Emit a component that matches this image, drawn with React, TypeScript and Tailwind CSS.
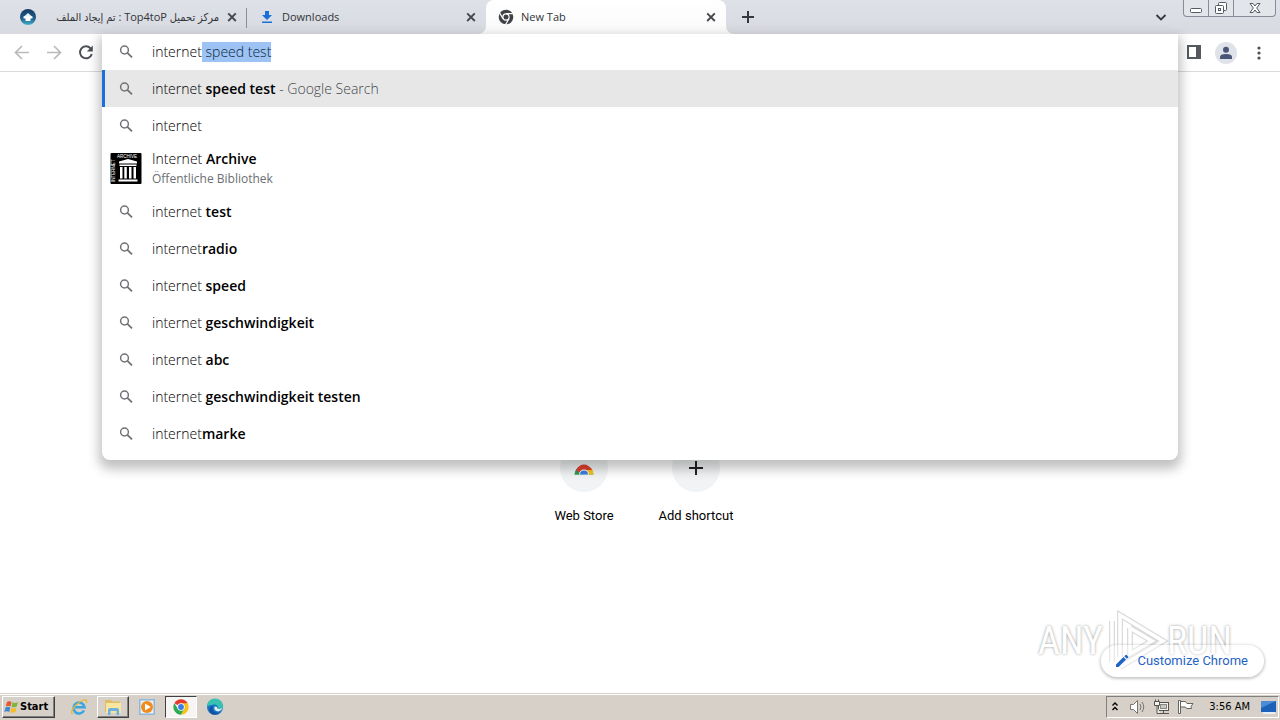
import { useEffect, useRef } from "react";
import type { ReactNode } from "react";

type Suggestion = { typed: string; rest: string };

const suggestions: Suggestion[] = [
  { typed: "internet ", rest: "test" },
  { typed: "internet", rest: "radio" },
  { typed: "internet ", rest: "speed" },
  { typed: "internet ", rest: "geschwindigkeit" },
  { typed: "internet ", rest: "abc" },
  { typed: "internet ", rest: "geschwindigkeit testen" },
  { typed: "internet", rest: "marke" },
];

function SearchIcon() {
  return (
    <svg viewBox="0 0 16 16" className="size-4 shrink-0" fill="none" stroke="#6f7377" strokeWidth="1.5" aria-hidden="true">
      <circle cx="6.500" cy="6" r="3.900" />
      <path d="M9.400 8.900 14 13.400" strokeWidth="1.800" />
    </svg>
  );
}

function CloseIcon() {
  return (
    <svg viewBox="0 0 16 16" className="size-4" fill="none" stroke="#46484d" strokeWidth="1.900" aria-hidden="true">
      <path d="M4.200 4.400 11.800 12M11.800 4.400 4.200 12" />
    </svg>
  );
}

function TopFavicon() {
  return (
    <svg viewBox="0 0 16 16" className="size-4 shrink-0" aria-hidden="true">
      <defs>
        <linearGradient id="fav" x1="0" y1="0" x2="0" y2="1">
          <stop offset="0" stopColor="#173a63" />
          <stop offset="0.6" stopColor="#1f5c8e" />
          <stop offset="1" stopColor="#45b5c9" />
        </linearGradient>
      </defs>
      <circle cx="8" cy="8" r="8" fill="url(#fav)" />
      <path d="M8 4 12.500 8H3.500Z" fill="#e6f2fa" />
      <path d="M3.500 7.500h9v2h-2V12h-5V9.500h-2z" fill="#fff" />
    </svg>
  );
}

function DownloadIcon() {
  return (
    <svg viewBox="0 0 16 16" className="size-4 shrink-0" fill="#1a6fd8" aria-hidden="true">
      <path d="M6 2h4v4h3L8 11 3 6h3zM3 12.500h10V14H3z" />
    </svg>
  );
}

function ChromeMono() {
  return (
    <svg viewBox="0 0 16 16" className="size-4 shrink-0" aria-hidden="true">
      <circle cx="8" cy="8" r="7.300" fill="#3f4246" />
      <circle cx="8" cy="8" r="3.700" fill="#fff" />
      <circle cx="8" cy="8" r="2.500" fill="#3f4246" />
      <path d="M8 4.600h7.500M5 9.700 1.300 3.400M11 9.700 7.300 16" stroke="#fff" strokeWidth="1.200" />
    </svg>
  );
}

function ChromeColor() {
  return (
    <svg viewBox="0 0 48 48" className="size-4" aria-hidden="true">
      <path d="M24 24 4.100 12.500A23 23 0 0 1 43.900 12.500Z" fill="#e33b2e" />
      <path d="M24 13h20A23 23 0 0 1 24 47l9.500-17.500Z" fill="#fbc116" />
      <path d="M14.500 29.500 4.100 12.500A23 23 0 0 0 24 47l9.500-17.500Z" fill="#2da94f" />
      <circle cx="24" cy="24" r="11" fill="#fff" />
      <circle cx="24" cy="24" r="8.700" fill="#3a7de8" />
    </svg>
  );
}

function ArchiveLogo() {
  return (
    <svg viewBox="0 1 32 32" className="size-8 shrink-0" role="img" aria-label="Internet Archive">
      <rect x="0.500" y="1" width="31" height="31" rx="1" fill="#000" />
      <g fill="#fff">
        <path d="M18 7 27 9.500v2H9V9.500ZM9.500 12.500h17V14h-17zM10 15h2.500v11.500H10zM14.300 15h2.500v11.500h-2.500zM19 15h2.500v11.500H19zM23.500 15H26v11.500h-2.500zM8.500 27.500h19v2h-19z" />
      </g>
      <text x="7" y="6" fontSize="4.500" fill="#fff" fontFamily="Liberation Sans">ARCHIVE</text>
      <text x="-30" y="5" fontSize="4.500" fill="#fff" fontFamily="Liberation Sans" transform="rotate(-90)">INTERNET</text>
    </svg>
  );
}

function Tab({ icon, title, active, divider, rtl }: { icon: ReactNode; title: string; active?: boolean; divider?: boolean; rtl?: boolean }) {
  return (
    <div
      role="tab"
      aria-selected={!!active}
      className={
        "relative flex h-[34px] min-w-0 items-center gap-[7px] pr-[7px] pl-3 " +
        (active ? "w-60 rounded-t-lg bg-linear-to-b from-white to-[#fafafa]" : "w-[239px]")
      }
    >
      {active && (
        <>
          <svg viewBox="0 0 8 8" className="absolute bottom-0 -left-2 size-2" aria-hidden="true"><path d="M8 0v8H0a8 8 0 0 0 8-8Z" fill="#fafafa" /></svg>
          <svg viewBox="0 0 8 8" className="absolute -right-2 bottom-0 size-2" aria-hidden="true"><path d="M0 0v8h8a8 8 0 0 1-8-8Z" fill="#fafafa" /></svg>
        </>
      )}
      {icon}
      <span
        dir={rtl ? "rtl" : "ltr"}
        className={
          "min-w-0 flex-1 overflow-hidden text-[11px] leading-4 whitespace-nowrap text-[#303338] " +
          (rtl ? "-mr-0.5 font-['Open_Sans','DejaVu_Sans_Condensed','DejaVu_Sans',sans-serif]" : "")
        }
      >
        {title}
      </span>
      <button type="button" aria-label="Close tab"><CloseIcon /></button>
      {divider && <span className="absolute top-2 right-0 h-5 w-px bg-[#8b8f96]" />}
    </div>
  );
}

function WindowButtons() {
  return (
    <div className="flex h-[17px] self-start overflow-hidden rounded-b-[4px] border border-t-0 border-[#878c96] bg-[#e2e5ea]">
      <button type="button" aria-label="Minimize" className="flex w-[25px] items-center justify-center border-r border-[#878c96]">
        <svg viewBox="0 0 14 14" className="size-3.5" fill="#fff" stroke="#555a63"><rect x="1.500" y="7.500" width="11" height="4" rx="1" /></svg>
      </button>
      <button type="button" aria-label="Restore" className="flex w-[25px] items-center justify-center border-r border-[#878c96]">
        <svg viewBox="0 0 14 14" className="size-3.5" fill="#fff" stroke="#555a63"><rect x="4.500" y="1.500" width="8" height="8" rx="1" /><rect x="1.500" y="4.500" width="8" height="8" rx="1" /><rect x="4.500" y="7.500" width="2" height="2" /></svg>
      </button>
      <button type="button" aria-label="Close window" className="flex w-[41px] items-center justify-center">
        <svg viewBox="0 0 14 14" className="size-3.5" fill="#fff" stroke="#555a63"><path d="M2 2.500h3l2 2.500 2-2.500h3L8.700 7l3.300 4.500H9L7 9l-2 2.500H2L5.300 7Z" /></svg>
      </button>
    </div>
  );
}

function Omnibox() {
  const input = useRef<HTMLInputElement>(null);
  useEffect(() => {
    input.current?.focus();
    input.current?.setSelectionRange(8, 19);
  }, []);
  const row = "flex h-[37px] w-full items-center gap-[18px] pl-4 text-left";
  return (
    <div className="absolute top-0 right-[102px] left-[102px] z-10 rounded-b-lg bg-white pb-2 text-[14px] leading-5 font-light text-black shadow-[0_6px_12px_3px_rgba(0,0,0,0.25)]">
      <div className="flex h-9 items-center gap-[18px] pl-4">
        <SearchIcon />
        <input
          ref={input}
          type="text"
          aria-label="Address and search bar"
          defaultValue="internet speed test"
          className="h-5 min-w-0 flex-1 bg-transparent outline-none selection:bg-[#9dc3f4] selection:text-[#0c1f38]"
        />
      </div>
      <ul>
        <li className="border-l-3 border-[#1a6fe0] bg-[#e7e7e7]">
          <button type="button" className="flex h-[37px] w-full items-center gap-[18px] pl-[13px] text-left">
            <SearchIcon />
            <span className="whitespace-pre">internet <b className="font-semibold">speed test</b> <span className="text-[#44474b]">- Google Search</span></span>
          </button>
        </li>
        <li><button type="button" className={row}><SearchIcon /><span>internet</span></button></li>
        <li>
          <button type="button" className="flex h-[49px] w-full items-center gap-[10px] pl-2 text-left">
            <ArchiveLogo />
            <span className="flex flex-col">
              <span>Internet <b className="font-semibold">Archive</b></span>
              <span className="text-[12px] font-normal text-[#6b6e72]">Öffentliche Bibliothek</span>
            </span>
          </button>
        </li>
        {suggestions.map((s) => (
          <li key={s.rest}>
            <button type="button" className={row}>
              <SearchIcon />
              <span className="whitespace-pre">{s.typed}<b className="font-semibold">{s.rest}</b></span>
            </button>
          </li>
        ))}
      </ul>
    </div>
  );
}

function Watermark() {
  return (
    <div className="pointer-events-none absolute right-12 bottom-[22px] flex items-center text-[38px] leading-[60px] font-normal text-white opacity-90 font-['Liberation_Sans_Narrow','Roboto_Condensed','Roboto',sans-serif] [text-shadow:0_0_3px_rgba(0,0,0,0.45)]">
      <span>ANY</span>
      <svg viewBox="0 0 64 60" className="h-[60px] w-16 overflow-visible" fill="none" strokeLinejoin="miter" aria-hidden="true">
        <g stroke="#d8d8d8" strokeWidth="6"><path d="M9 51V10M27 17 49 30 27 43V17M17 46V4L60 30 17 56" /></g>
        <g stroke="#fff" strokeWidth="3.500"><path d="M9 51V10M27 17 49 30 27 43V17M17 46V4L60 30 17 56" /></g>
      </svg>
      <span>RUN</span>
    </div>
  );
}

function Taskbar() {
  return (
    <footer className="flex h-[27px] items-center border-t border-[#d4d0c8] bg-[#d6d0c8] pr-px pl-0.5 shadow-[inset_0_1px_0_#fff]">
      <button type="button" className="flex h-[22px] w-[53px] items-center border border-t-white border-r-[#404040] border-b-[#404040] border-l-white pl-px text-[11px] font-bold text-black shadow-[inset_-1px_-1px_0_#808080] font-['DejaVu_Sans_Condensed',sans-serif]">
        <svg viewBox="0 0 16 16" className="size-4" aria-hidden="true">
          <path d="M3 3Q5 1.500 7.500 3L6.500 7.500Q4 6.200 1.800 7.500Z" fill="#e5562a" /><path d="M8.500 3.300Q11 4.700 14 3L12.800 7.600Q10 8.900 7.500 7.700Z" fill="#7db63c" />
          <path d="M1.500 8.500Q4 7.200 6.300 8.500L5.200 13Q3 11.700.4 13Z" fill="#3c87d3" /><path d="M7.300 8.800Q10 10 12.500 8.700L11.500 13Q8.700 14.500 6.200 13.300Z" fill="#f6bc26" />
        </svg>
        Start
      </button>
      <div className="ml-2 flex items-center gap-0.5">
        <button type="button" aria-label="Internet Explorer" className="flex h-[22px] w-8 items-center justify-center">
          <svg viewBox="0 0 18 18" className="size-[18px]" fill="none" aria-hidden="true"><path d="M14 12.500A5.500 5.500 0 1 1 14.500 9.300H5" stroke="#37a6e3" strokeWidth="2.500" /><path d="M2.500 16C0 14 4 8 9 4.500S17.500 1 16.500 5" stroke="#e8b72c" strokeWidth="1.300" /></svg>
        </button>
        <button type="button" aria-label="Explorer" className="flex h-[22px] w-8 items-center justify-center border border-t-white border-r-[#404040] border-b-[#404040] border-l-white shadow-[inset_-1px_-1px_0_#808080]">
          <svg viewBox="0 0 18 18" className="size-[18px]" aria-hidden="true"><path d="M1 2h6l1 1.500h8V14H1z" fill="#dfbd62" /><path d="M2 5h15v10H2z" fill="#f8e6a0" /><path d="M4 17v-5q0-2 2-2h7q2 0 2 2v5h-2.500v-4h-6v4Z" fill="#6fb1de" /></svg>
        </button>
        <button type="button" aria-label="Media Player" className="flex h-[22px] w-8 items-center justify-center">
          <svg viewBox="0 0 18 18" className="size-[18px]" aria-hidden="true"><rect x="1" y="1" width="16" height="16" fill="#8eb7dc" /><rect x="2.500" y="2.500" width="13" height="13" fill="#e8f1f8" /><circle cx="9" cy="9" r="6" fill="#f18a1d" /><path d="M7 5.500 12.800 9 7 12.500Z" fill="#fff" /></svg>
        </button>
        <button type="button" aria-label="Chrome" className="flex h-[22px] w-8 items-center justify-center border border-t-[#404040] border-r-white border-b-white border-l-[#404040] bg-[#f6f5f4]">
          <ChromeColor />
        </button>
        <button type="button" aria-label="Edge" className="flex h-[22px] w-8 items-center justify-center">
          <svg viewBox="0 0 18 18" className="size-[18px]" aria-hidden="true"><circle cx="9" cy="9" r="8" fill="#1673c5" /><path d="M1 9A8 8 0 0 1 17 8c0 3-2.500 4-5 3.500 1-4-3-6-6-4.500-3 0-4.500 1-5 2Z" fill="#37c1b1" /><path d="M7 8c-2 4 1 8 7 6.500A8 8 0 0 1 6 16C2 13 3 9 7 8Z" fill="#12509c" /><path d="M8.500 8.500q3-.5 3 2 2 1.500 5-.5-1 3-4 3.500-5-.5-4-5Z" fill="#e4eef5" /></svg>
        </button>
      </div>
      <div className="ml-auto flex h-[22px] items-center border border-t-[#808080] border-r-white border-b-white border-l-[#808080] pl-1">
        <button type="button" aria-label="Show hidden icons">
          <svg viewBox="0 0 8 12" className="h-3 w-2" fill="none" stroke="#000" strokeWidth="1.400"><path d="M1.500 4.500 4 2l2.500 2.500M1.500 9 4 6.500 6.500 9" /></svg>
        </button>
        <svg viewBox="0 0 18 16" className="ml-2.5 h-4 w-[18px]" fill="#fff" stroke="#77756f" aria-label="Volume"><path d="M1.500 5.500h3l4-4v13l-4-4h-3Z" /><path d="M11 5q2 3 0 6M13 3q3.500 5 0 10" fill="none" /></svg>
        <svg viewBox="0 0 18 16" className="ml-1.5 h-4 w-[18px]" fill="#f4f3f0" stroke="#55534e" aria-label="Network"><rect x="5.500" y="3.500" width="10" height="8" /><rect x="7.500" y="5.500" width="6" height="4" fill="#c9c7c2" stroke="#8a8883" /><path d="M6 14.500h10M10.500 11.500v3" /><path d="M1.500 2.500h5v4h-5zM2.500.5v2M5.500.5v2M4 6.500v8h3" /></svg>
        <svg viewBox="0 0 18 16" className="ml-1.5 h-4 w-[18px]" fill="#fff" stroke="#66645f" aria-label="Action Center"><path d="M1.500 1.500h2v13h-2zM3.500 2.500h5l1.500 2h6l-2 3 .5 2h-5l-1-1.500h-5" /></svg>
        <time className="ml-3.5 text-[11px] text-black font-['DejaVu_Sans_Condensed',sans-serif]">3:56 AM</time>
        <button type="button" aria-label="Show desktop" className="ml-2.5">
          <svg viewBox="0 0 18 16" className="h-4 w-[18px]"><rect x="1" y="2" width="15" height="11" fill="#1c62b8" /><path d="M1 2h15L1 9Z" fill="#4c8cd4" /><path d="M3 13h12v2H3z" fill="#e8eef5" /></svg>
        </button>
      </div>
    </footer>
  );
}

export default function App() {
  return (
    <div className="flex min-h-screen flex-col bg-white font-['Open_Sans',sans-serif]">
      <header className="flex h-[34px] bg-linear-to-b from-[#dee1e8] to-[#d8dae0] pr-1 pl-2">
        <div role="tablist" className="flex min-w-0">
          <Tab icon={<TopFavicon />} title="مركز تحميل Top4toP : تم إيجاد الملف" divider rtl />
          <Tab icon={<DownloadIcon />} title="Downloads" />
          <Tab icon={<ChromeMono />} title="New Tab" active />
        </div>
        <button type="button" aria-label="New tab" className="ml-3">
          <svg viewBox="0 0 20 20" className="size-5" stroke="#343840" strokeWidth="2"><path d="M10 4v12M4 10h12" /></svg>
        </button>
        <button type="button" aria-label="Search tabs" className="mr-3.5 ml-auto">
          <svg viewBox="0 0 16 16" className="size-4" fill="none" stroke="#343840" strokeWidth="1.800"><path d="m3.500 6 4.500 4.500L12.500 6" /></svg>
        </button>
        <WindowButtons />
      </header>
      <nav aria-label="Toolbar" className="relative flex h-[38px] items-center border-b border-[#dadada] bg-white pr-[13px] pl-3">
        <button type="button" aria-label="Back">
          <svg viewBox="0 0 20 20" className="size-5" fill="none" stroke="#b9babc" strokeWidth="1.700"><path d="M17 9.500H4M10 3 3.500 9.500l6.500 6.500" /></svg>
        </button>
        <button type="button" aria-label="Forward" className="ml-3">
          <svg viewBox="0 0 20 20" className="size-5" fill="none" stroke="#b9babc" strokeWidth="1.700"><path d="M3 9.500h13M10 3l6.500 6.500-6.500 6.500" /></svg>
        </button>
        <button type="button" aria-label="Reload" className="ml-3">
          <svg viewBox="0 0 20 20" className="size-5" fill="none" stroke="#4c4f53" strokeWidth="2"><path d="M15.800 11A6 6 0 1 1 14.500 5.300L15.500 6.500" /><path d="M16.800 2.500v6h-6Z" fill="#4c4f53" stroke="none" /></svg>
        </button>
        <Omnibox />
        <div className="ml-auto flex items-center">
          <button type="button" aria-label="Side panel">
            <svg viewBox="0 1 16 16" className="size-4"><path d="M1 1h14v14H1zM3 3v10h7V3z" fill="#55585c" fillRule="evenodd" /></svg>
          </button>
          <button type="button" aria-label="Profile" className="ml-[13px]">
            <svg viewBox="0 0 22 22" className="size-[22px]"><circle cx="11" cy="11" r="11" fill="#dfe2e8" /><circle cx="11" cy="7.800" r="3" fill="#4a5578" /><path d="M5 17v-2q0-3 6-3t6 3v2Z" fill="#4a5578" /></svg>
          </button>
          <button type="button" aria-label="Menu" className="ml-3.5">
            <svg viewBox="0 0 16 16" className="size-4" fill="#4c4f53"><circle cx="8" cy="3" r="1.600" /><circle cx="8" cy="8" r="1.600" /><circle cx="8" cy="13" r="1.600" /></svg>
          </button>
        </div>
      </nav>
      <main className="relative flex flex-1 justify-center pt-[372px] font-['Roboto',sans-serif]">
        <a href="#store" className="flex w-28 flex-col items-center text-[13px] leading-5 text-black">
          <span className="flex size-12 items-center justify-center rounded-full bg-[#f1f3f4]">
            <svg viewBox="0 -7 20 20" className="size-5" aria-hidden="true">
              <path d="M.5 9.500A9.500 9.500 0 0 1 3 3.500L10 9.500Z" fill="#2f9e4f" /><path d="M.5 9.500A9.500 8 0 0 1 19.500 9.500Z" fill="#2f9e4f" /><path d="M10 9.500V3h7.500q2 3 2 6.500Z" fill="#f8c21c" /><path d="M2 5Q5-.5 10-.5T18 5H10L6 8Z" fill="#e0402f" /><path d="M5 9.500a5 5 0 0 1 10 0Z" fill="#fff" /><path d="M6 9.500a4 4 0 0 1 8 0Z" fill="#3d7fe6" />
            </svg>
          </span>
          <span className="mt-3.5">Web Store</span>
        </a>
        <button type="button" className="flex w-28 flex-col items-center self-start text-[13px] leading-5 text-black">
          <span className="flex size-12 items-center justify-center rounded-full bg-[#f1f3f4]">
            <svg viewBox="0 0 20 20" className="size-5" stroke="#202124" strokeWidth="2" aria-hidden="true"><path d="M10 3v14M3 10h14" /></svg>
          </span>
          <span className="mt-3.5">Add shortcut</span>
        </button>
        <Watermark />
        <button type="button" className="absolute right-4 bottom-4 flex h-8 items-center gap-2 rounded-full bg-white/40 pr-4 pl-3 text-[13px] text-[#1f63c4] shadow-[0_1px_3px_1px_rgba(0,0,0,0.22)]">
          <svg viewBox="-2 0 16 16" className="size-4" fill="#1f63c4" aria-hidden="true"><path d="M1 11.500 8.500 4 11 6.500 3.500 14H1zM9.300 3.200l1.300-1.300q.5-.4 1 0L13.100 3.400q.4.500 0 1l-1.300 1.300Z" /></svg>
          Customize Chrome
        </button>
      </main>
      <Taskbar />
    </div>
  );
}
